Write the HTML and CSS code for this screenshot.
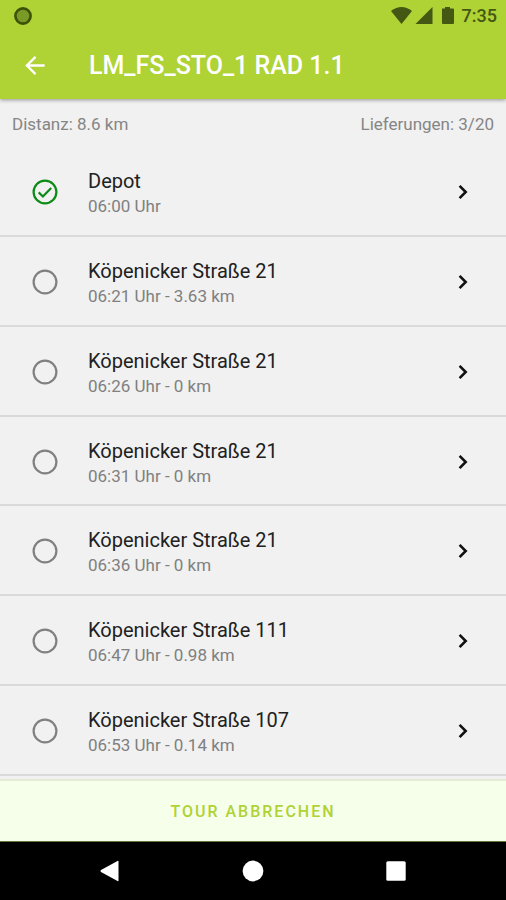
FILE: index.html
```html
<!DOCTYPE html>
<html lang="de">
<head>
  <meta charset="UTF-8">
  <meta name="viewport" content="width=device-width, initial-scale=1.0">
  <title>LM_FS_STO_1 RAD 1.1</title>
  <link rel="stylesheet" href="styles.css">
</head>
<body>
  <!-- Shared icons -->
  <svg class="sprite" aria-hidden="true">
    <symbol id="icon-open" viewBox="0 0 30 30">
      <circle cx="15" cy="15" r="11.4" fill="none" stroke="currentColor" stroke-width="2.2"/>
    </symbol>
    <symbol id="icon-done" viewBox="0 0 30 30">
      <circle cx="15" cy="15" r="11.4" fill="none" stroke="currentColor" stroke-width="2.2"/>
      <path d="M8.7 15.4l4.2 4.1 8.3-8.6" fill="none" stroke="currentColor" stroke-width="2.2"/>
    </symbol>
    <symbol id="icon-chevron" viewBox="0 0 20 20">
      <path d="M6.6 3.9l6.1 6.1-6.1 6.1" fill="none" stroke="currentColor" stroke-width="2.6"/>
    </symbol>
  </svg>

  <header class="top">
    <div class="statusbar">
      <svg class="recorder" viewBox="0 0 20 20" aria-hidden="true">
        <circle cx="10" cy="10" r="7.6" fill="#7a9a26" stroke="#3d5209" stroke-width="2.6"/>
      </svg>
      <svg class="signals" viewBox="0 0 64 20" aria-hidden="true">
        <path d="M0 5Q10.5-3 21 5L10.5 18z"/>
        <path d="M24.5 18L41.5 1v17z"/>
        <path d="M51 2.600h3V1h5v1.600h3q1 0 1 1V17q0 1-1 1H52q-1 0-1-1z"/>
      </svg>
      <span class="clock">7:35</span>
    </div>
    <div class="appbar">
      <button class="back" type="button" aria-label="Zurück">
        <svg viewBox="0 0 24 24" aria-hidden="true">
          <path d="M21.5 12H3.5M12 3l-9 9 9 9" fill="none" stroke="currentColor" stroke-width="2.4"/>
        </svg>
      </button>
      <h1>LM_FS_STO_1 RAD 1.1</h1>
    </div>
  </header>

  <main class="tour">
    <div class="summary">
      <span>Distanz: 8.6 km</span>
      <span>Lieferungen: 3/20</span>
    </div>

    <ul class="stops">
      <li>
        <a class="stop" href="#">
          <svg class="state done"><use href="#icon-done"/></svg>
          <span class="info"><span class="name">Depot</span><span class="meta">06:00 Uhr</span></span>
          <svg class="chevron"><use href="#icon-chevron"/></svg>
        </a>
      </li>
      <li>
        <a class="stop" href="#">
          <svg class="state"><use href="#icon-open"/></svg>
          <span class="info"><span class="name">Köpenicker Straße 21</span><span class="meta">06:21 Uhr - 3.63 km</span></span>
          <svg class="chevron"><use href="#icon-chevron"/></svg>
        </a>
      </li>
      <li>
        <a class="stop" href="#">
          <svg class="state"><use href="#icon-open"/></svg>
          <span class="info"><span class="name">Köpenicker Straße 21</span><span class="meta">06:26 Uhr - 0 km</span></span>
          <svg class="chevron"><use href="#icon-chevron"/></svg>
        </a>
      </li>
      <li>
        <a class="stop" href="#">
          <svg class="state"><use href="#icon-open"/></svg>
          <span class="info"><span class="name">Köpenicker Straße 21</span><span class="meta">06:31 Uhr - 0 km</span></span>
          <svg class="chevron"><use href="#icon-chevron"/></svg>
        </a>
      </li>
      <li>
        <a class="stop" href="#">
          <svg class="state"><use href="#icon-open"/></svg>
          <span class="info"><span class="name">Köpenicker Straße 21</span><span class="meta">06:36 Uhr - 0 km</span></span>
          <svg class="chevron"><use href="#icon-chevron"/></svg>
        </a>
      </li>
      <li>
        <a class="stop" href="#">
          <svg class="state"><use href="#icon-open"/></svg>
          <span class="info"><span class="name">Köpenicker Straße 111</span><span class="meta">06:47 Uhr - 0.98 km</span></span>
          <svg class="chevron"><use href="#icon-chevron"/></svg>
        </a>
      </li>
      <li>
        <a class="stop" href="#">
          <svg class="state"><use href="#icon-open"/></svg>
          <span class="info"><span class="name">Köpenicker Straße 107</span><span class="meta">06:53 Uhr - 0.14 km</span></span>
          <svg class="chevron"><use href="#icon-chevron"/></svg>
        </a>
      </li>
    </ul>
  </main>

  <button class="cancel" type="button">TOUR ABBRECHEN</button>

  <!-- Android system navigation -->
  <nav class="sysnav">
    <button type="button" aria-label="Zurück">
      <svg viewBox="0 0 24 24"><path d="M20.5 2.5v19q0 1-1 .5L3 13q-1.2-1 0-2L19.5 2q1-.5 1 .5z"/></svg>
    </button>
    <button type="button" aria-label="Startbildschirm">
      <svg viewBox="0 0 24 24"><circle cx="12" cy="12" r="10.4"/></svg>
    </button>
    <button type="button" aria-label="Übersicht">
      <svg viewBox="0 0 24 24"><rect x="2.3" y="2.3" width="19.4" height="19.4" rx="1.5"/></svg>
    </button>
  </nav>
</body>
</html>
```
FILE: styles.css
```css
* {
  box-sizing: border-box;
}

body {
  display: flex;
  flex-direction: column;
  min-height: 100vh;
  margin: 0;
  font-family: Roboto, sans-serif;
  background-color: #f1f1f1;
  color: #212121;
}

button {
  padding: 0;
  border: none;
  background: none;
  font-family: inherit;
  cursor: pointer;
}

svg {
  display: block;
  flex-shrink: 0;
}

.sprite {
  position: absolute;
  width: 0;
  height: 0;
}

/* Status bar and title */
.top {
  background-color: #afd235;
  box-shadow: 0 1px 4px rgba(0, 0, 0, 0.4);
}

.statusbar {
  display: flex;
  align-items: center;
  height: 31px;
  padding: 0 9px 0 13px;
  color: #445713;
}

.recorder {
  width: 20px;
  height: 20px;
  margin-right: auto;
}

.signals {
  width: 64px;
  height: 20px;
  margin-right: 7px;
  fill: currentColor;
}

.clock {
  font-size: 18px;
  font-weight: 500;
}

.appbar {
  display: flex;
  align-items: center;
  gap: 42px;
  height: 68px;
  padding: 0 24px;
  color: white;
}

.back {
  color: inherit;
}

.back svg {
  width: 23px;
  height: 23px;
}

.appbar h1 {
  margin: 0;
  font-size: 25px;
  font-weight: 500;
}

/* Tour overview */
.tour {
  display: flex;
  flex: 1;
  flex-direction: column;
  padding-bottom: 3px;
}

.summary {
  display: flex;
  justify-content: space-between;
  height: 48px;
  padding: 0 12px;
  font-size: 17px;
  line-height: 50px;
  color: #858585;
}

.stops {
  display: flex;
  flex: 1;
  flex-direction: column;
  margin: 0;
  padding: 0;
  list-style: none;
}

.stops li {
  display: flex;
  flex: 1;
  border-bottom: 2px solid #dadada;
}

.stop {
  display: flex;
  flex: 1;
  align-items: center;
  padding: 10px 33px 8px 30px;
  color: inherit;
  text-decoration: none;
}

.state {
  width: 30px;
  height: 30px;
  margin-right: 28px;
  color: #808080;
}

.state.done {
  color: #0c8a16;
}

.info {
  display: flex;
  flex: 1;
  flex-direction: column;
  padding-top: 2px;
}

.name {
  font-size: 20px;
  line-height: 26px;
}

.meta {
  font-size: 17px;
  line-height: 24px;
  color: #808080;
}

.chevron {
  width: 20px;
  height: 20px;
  color: #111;
}

.cancel {
  height: 63px;
  border-top: 2px solid #e4ead6;
  border-bottom: 1px solid #66753f;
  background-color: #f6ffea;
  font-size: 16px;
  font-weight: 500;
  letter-spacing: 2px;
  color: #afd235;
}

.sysnav {
  display: flex;
  align-items: center;
  justify-content: center;
  gap: 119px;
  height: 58px;
  background-color: black;
}

.sysnav svg {
  width: 24px;
  height: 24px;
  fill: white;
}
```
